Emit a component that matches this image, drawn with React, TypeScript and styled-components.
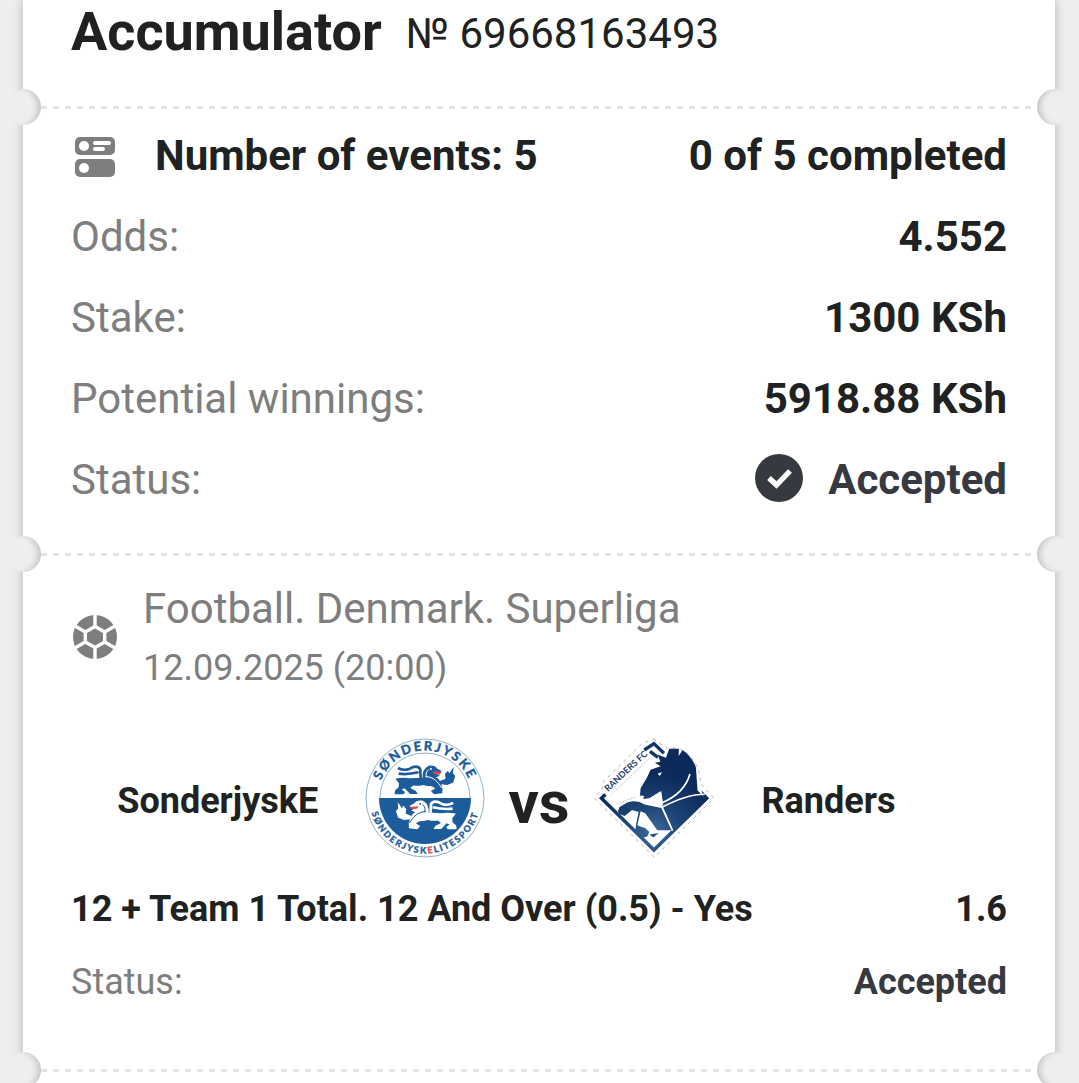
import React from "react";
import styled, { createGlobalStyle } from "styled-components";

const GlobalStyle = createGlobalStyle`
  * {
    box-sizing: border-box;
  }
  body {
    margin: 0;
    overflow-x: hidden;
    background: #eeeeee;
    font-family: Roboto, sans-serif;
    font-size: 42px;
    line-height: 57px;
    color: #202222;
  }
`;

const Ticket = styled.main`
  margin: 0 24px 0 23px;
  padding-bottom: 48px;
  background: #ffffff;
  box-shadow: 0 0 10px rgba(0, 0, 0, 0.25);
`;

const Header = styled.header`
  display: flex;
  align-items: center;
  gap: 24px;
  height: 106px;
  padding: 0 48px 43px;
  white-space: nowrap;
`;

const Title = styled.h1`
  margin: 0;
  font-size: 54px;
  font-weight: 700;
`;

const TicketNumber = styled.span`
  padding-top: 3px;
`;

const Divider = styled.div`
  position: relative;
  height: 3px;
  padding: 0 18px;
`;

const Dashes = styled.div`
  height: 3px;
  background: repeating-linear-gradient(90deg, #e3e3e3 0 6px, transparent 6px 12px);
`;

const Notch = styled.span<{ $side: "left" | "right" }>`
  position: absolute;
  top: -17px;
  ${({ $side }) => $side}: -18px;
  width: 36px;
  height: 36px;
  border-radius: 50%;
  background: #eeeeee;
  box-shadow: inset ${({ $side }) => ($side === "left" ? "-6px" : "6px")} 0 6px -3px rgba(0, 0, 0, 0.18);
`;

const Summary = styled.section`
  display: flex;
  flex-direction: column;
  gap: 24px;
  padding: 18px 48px 45px;
`;

const Row = styled.div`
  display: flex;
  align-items: center;
  justify-content: space-between;
  white-space: nowrap;
`;

const Count = styled.div`
  display: flex;
  align-items: center;
  gap: 36px;
  font-weight: 700;
`;

const Label = styled.span`
  color: #7e7e7e;
`;

const Value = styled.span<{ $muted?: boolean }>`
  display: flex;
  align-items: center;
  gap: 24px;
  font-weight: 700;
  color: ${({ $muted }) => ($muted ? "#36393f" : "#202222")};
`;

const Event = styled.section`
  padding: 23px 48px 63px;
  font-size: 36px;
  line-height: 48px;
`;

const League = styled.div`
  display: flex;
  align-items: center;
  gap: 24px;
  color: #7e7e7e;
  white-space: nowrap;
`;

const LeagueName = styled.div`
  margin-bottom: 5px;
  font-size: 42px;
  line-height: 60px;
`;

const Match = styled.div`
  display: grid;
  grid-template-columns: minmax(0, 1fr) 120px 109px 120px minmax(0, 1fr);
  align-items: center;
  margin: 46px 0 27px;
`;

const Team = styled.div<{ $away?: boolean }>`
  padding: 6px 0 0 ${({ $away }) => ($away ? "48px" : "0")};
  font-weight: 700;
  text-align: ${({ $away }) => ($away ? "left" : "center")};
`;

const Versus = styled.div`
  padding-top: 10px;
  font-size: 60px;
  font-weight: 700;
  text-align: center;
`;

const Details = styled.div`
  display: flex;
  flex-direction: column;
  gap: 25px;
`;

const EventsIcon = () => (
  <svg width="48" height="48" viewBox="0 0 48 48" aria-hidden="true">
    <rect x="4" y="5" width="40" height="18" rx="5" fill="#7e7e7e" />
    <rect x="4" y="27" width="40" height="18" rx="5" fill="#7e7e7e" />
    <circle cx="13" cy="14" r="5" fill="#fff" />
    <circle cx="13" cy="36" r="5" fill="#fff" />
    <rect x="22" y="9" width="18" height="4" rx="2" fill="#fff" />
    <rect x="22" y="15" width="12" height="4" rx="2" fill="#fff" />
  </svg>
);

const BallIcon = () => (
  <svg width="48" height="48" viewBox="0 0 48 48" aria-hidden="true">
    <circle cx="24" cy="25" r="22" fill="#7e7e7e" />
    <g stroke="#fff" strokeWidth="3.400" fill="none">
      <path d="M24 14.500 33.700 20V30L24 35.500 14.300 30V20Z" />
      <path d="M24 14.500V2M24 35.500V48M33.700 20 44 14M33.700 30 44 36M14.300 20 4 14M14.300 30 4 36" />
    </g>
  </svg>
);

const CheckIcon = () => (
  <svg width="48" height="48" viewBox="0 0 48 48" overflow="visible" aria-hidden="true">
    <circle cx="23" cy="22" r="24" fill="#36393f" />
    <path d="M13 22 20.500 29 34 15" fill="none" stroke="#fff" strokeWidth="5.400" />
  </svg>
);

const Lion = ({ fill, detail }: { fill: string; detail: string }) => (
  <g>
    <path
      d="M106 146Q128 141 150 145L188 143Q186 118 206 107 224 104 232 116L246 123 230 131 240 137 228 142Q236 146 240 153L257 146 255 132 264 122 268 130 281 111 279 130 286 138 280 158 262 165 244 163Q250 177 247 190L222 193 213 183 226 176Q218 166 206 169L190 165Q176 169 160 167L151 174 168 183 173 192H150L134 175 125 179 135 186 131 193H104L105 182 116 172 117 160Z"
      fill={fill}
    />
    <path d="M114 114Q130 123 148 117 172 103 181 118L182 144M116 131Q140 135 176 127" fill="none" stroke={fill} strokeWidth="8" />
    <path d="M196 140C222 140 234 156 245 174M206 119Q194 129 201 142" fill="none" stroke={detail} strokeWidth="3" />
    <path d="M218 124 246 126 238 134 222 131Z" fill="#e5474d" />
    <circle cx="213" cy="117" r="3" fill={detail} />
  </g>
);

const SonderjyskeLogo = () => (
  <svg width="120" height="120" viewBox="0 0 120 120" role="img" aria-label="SonderjyskE">
    <defs>
      <path id="ring-top" d="M12.500 60A47.500 47.500 0 0 1 107.500 60" />
      <path id="ring-bottom" d="M4.500 60A55.500 55.500 0 0 0 115.500 60" />
    </defs>
    <circle cx="60" cy="60" r="59" fill="#fff" stroke="#8eb0cb" />
    <circle cx="60" cy="60" r="45" fill="#fff" stroke="#8eb0cb" />
    <path d="M14 60A46 46 0 0 0 106 60Z" fill="#1d5c9b" />
    <g transform="scale(0.333) translate(-15 -24)">
      <Lion fill="#1d5c9b" detail="#fff" />
      <g transform="translate(394 105) scale(-1 1)">
        <Lion fill="#fff" detail="#1d5c9b" />
      </g>
    </g>
    <g fill="#1d5c9b" stroke="#1d5c9b" strokeWidth="0.300" fontFamily="Lato, sans-serif" fontWeight="900" textAnchor="middle">
      <text fontSize="13">
        <textPath href="#ring-top" startOffset="50%" letterSpacing="2">
          SØNDERJYSKE
        </textPath>
      </text>
      <text fontSize="9">
        <textPath href="#ring-bottom" startOffset="50%" letterSpacing="1.700">
          SØNDERJYSK
          <tspan fill="#e5474d" stroke="#e5474d">
            E
          </tspan>
          LITESPORT
        </textPath>
      </text>
    </g>
  </svg>
);

const RandersLogo = () => (
  <svg width="120" height="120" viewBox="0 0 120 120" role="img" aria-label="Randers">
    <defs>
      <radialGradient id="shield" gradientUnits="userSpaceOnUse" cx="190" cy="310" r="180">
        <stop offset="0" stopColor="#3f6c9b" />
        <stop offset="0.450" stopColor="#1e4678" />
        <stop offset="1" stopColor="#0c2b5b" />
      </radialGradient>
    </defs>
    <g transform="scale(0.333) translate(-12 -24)">
      <path
        d="M190 27 232 55Q272 48 300 78 330 110 332 160L372 205 193 382 13 205 30 185 40 170V155L155 42Z"
        fill="#fff"
        stroke="#8b8b8b"
        strokeWidth="2"
        strokeDasharray="10 12"
      />
      <path d="M163 60 192 41 222 70M180 64 204 82" fill="none" stroke="#12356a" strokeWidth="10" />
      <path d="M42 190 27 205 192 368 358 205 335 182 342 205 192 353 42 205 50 197Z" fill="url(#shield)" />
      <path
        d="M238 56 267 56 266 78 278 60Q306 80 318 112L323 182 346 205 248 304 218 232 212 184 180 204 163 207 150 197 152 175 170 145 182 119 212 109 195 98 211 95 204 74 228 83Z"
        fill="url(#shield)"
      />
      <path
        d="M84 244 88 232 112 218Q140 208 164 224L214 234 246 301 202 301 166 250 152 244 142 286 164 292 178 306 172 320 156 324 136 308 138 285 146 246 126 240 112 252 104 258 88 252Z"
        fill="url(#shield)"
      />
      <path d="M203 131 216 126 210 138Z" fill="#fff" />
      <path d="M151 196 164 199 158 205ZM180 204 214 184 220 226 194 220Z" fill="#fff" />
      <path
        d="M300 132Q285 188 218 218M345 193Q294 192 216 232M216 230 248 302"
        fill="none"
        stroke="#fff"
        strokeWidth="5"
      />
      <path d="M154 254 176 278 170 296 146 288Z" fill="#fff" />
      <path d="M179 314 206 309 190 323Z" fill="#234e7e" />
      <path d="M64 194 180 84M80 222 140 200" fill="none" stroke="#777" strokeWidth="1.500" strokeDasharray="5 4" />
      <g transform="translate(54 186) rotate(-43)">
        <text fontFamily="Lato, sans-serif" fontSize="27" fontWeight="700" fill="#1c3d6e">
          RANDERS FC
        </text>
      </g>
    </g>
  </svg>
);

const Perforation: React.FC = () => (
  <Divider>
    <Dashes />
    <Notch $side="left" />
    <Notch $side="right" />
  </Divider>
);

const totals = [
  { label: "Odds:", value: "4.552" },
  { label: "Stake:", value: "1300 KSh" },
  { label: "Potential winnings:", value: "5918.88 KSh" },
];

const App: React.FC = () => {
  return (
    <>
      <GlobalStyle />
      <Ticket>
        <Header>
          <Title>Accumulator</Title>
          <TicketNumber>№ 69668163493</TicketNumber>
        </Header>
        <Perforation />
        <Summary>
          <Row>
            <Count>
              <EventsIcon />
              Number of events: 5
            </Count>
            <Value>0 of 5 completed</Value>
          </Row>
          {totals.map(({ label, value }) => (
            <Row key={label}>
              <Label>{label}</Label>
              <Value>{value}</Value>
            </Row>
          ))}
          <Row>
            <Label>Status:</Label>
            <Value $muted>
              <CheckIcon />
              Accepted
            </Value>
          </Row>
        </Summary>
        <Perforation />
        <Event>
          <League>
            <BallIcon />
            <div>
              <LeagueName>Football. Denmark. Superliga</LeagueName>
              <div>12.09.2025 (20:00)</div>
            </div>
          </League>
          <Match>
            <Team>SonderjyskE</Team>
            <SonderjyskeLogo />
            <Versus>vs</Versus>
            <RandersLogo />
            <Team $away>Randers</Team>
          </Match>
          <Details>
            <Row>
              <Value>12 + Team 1 Total. 12 And Over (0.5) - Yes</Value>
              <Value>1.6</Value>
            </Row>
            <Row>
              <Label>Status:</Label>
              <Value $muted>Accepted</Value>
            </Row>
          </Details>
        </Event>
        <Perforation />
      </Ticket>
    </>
  );
};

export default App;
